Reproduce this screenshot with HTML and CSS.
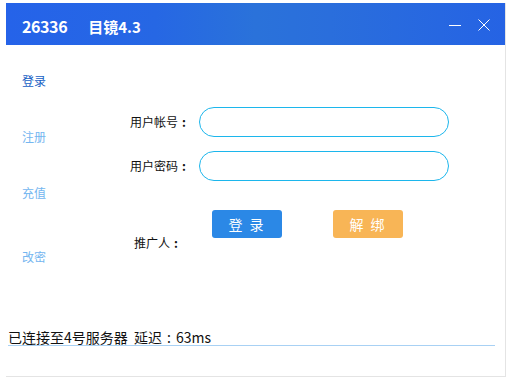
FILE: index.html
```html
<!DOCTYPE html>
<html lang="zh">
<head>
<meta charset="utf-8">
<link rel="stylesheet" href="styles.css">
</head>
<body>
<div class="window">
  <div class="titlebar">
    <span class="appid">26336</span>
    <span class="appname">目镜4.3</span>
    <div class="controls">
      <svg class="ctl" width="14" height="14" viewBox="0 0 14 14"><line x1="1" y1="8.5" x2="13" y2="8.5" stroke="#fff" stroke-width="1"/></svg>
      <svg class="ctl" width="14" height="14" viewBox="0 0 14 14"><path d="M1.5 2.5 L12.5 13.5 M12.5 2.5 L1.5 13.5" stroke="#fff" stroke-width="1"/></svg>
    </div>
  </div>
  <div class="main">
    <nav class="sidebar">
      <a class="nav-item active">登录</a>
      <a class="nav-item">注册</a>
      <a class="nav-item">充值</a>
      <a class="nav-item last">改密</a>
    </nav>
    <div class="form">
      <div class="row">
        <label class="label">用户帐号<span class="colon">:</span></label>
        <input class="field" type="text">
      </div>
      <div class="row">
        <label class="label">用户密码<span class="colon">:</span></label>
        <input class="field" type="password">
      </div>
      <div class="actions">
        <span class="referrer">推广人<span class="colon">:</span></span>
        <button class="btn btn-login">登 录</button>
        <button class="btn btn-unbind">解 绑</button>
      </div>
    </div>
  </div>
  <div class="status">已连接至4号服务器&nbsp;&nbsp;延迟<span class="colon colon-lg">:</span>63ms</div>
</div>
</body>
</html>
```
FILE: styles.css
```css
html, body {
  margin: 0;
  padding: 0;
  background: #ffffff;
}
body {
  font-family: "Noto Sans CJK SC", "Noto Sans", sans-serif;
}
.colon {
  display: inline-block;
  width: 12px;
  text-align: center;
  font-weight: bold;
}
.colon-lg {
  width: 14px;
  font-weight: normal;
}
.window {
  margin: 3px 0 0 6px;
  width: 500px;
  height: 374px;
  box-sizing: border-box;
  border-right: 1px solid #e4e4e4;
  border-bottom: 1px solid #e4e4e4;
  display: flex;
  flex-direction: column;
  background: #fff;
}
.titlebar {
  height: 42px;
  flex: none;
  display: flex;
  align-items: center;
  padding: 4px 0 0 16px;
  box-sizing: border-box;
  background: linear-gradient(90deg, #2563e9 0%, #2667e4 30%, #2a72da 50%, #2a6edc 65%, #2563e4 100%);
  color: #fff;
  font-weight: bold;
}
.appid {
  font-size: 16px;
  letter-spacing: -0.4px;
}
.appname {
  font-size: 15px;
  margin-left: 21px;
}
.controls {
  margin-left: auto;
  display: flex;
  gap: 15px;
  padding-right: 14px;
  margin-top: -4px;
}
.ctl {
  display: block;
}
.main {
  flex: 1;
  display: flex;
}
.sidebar {
  width: 118px;
  flex: none;
  display: flex;
  flex-direction: column;
  align-items: flex-start;
  padding: 28px 0 0 16px;
  box-sizing: border-box;
  gap: 40px;
}
.nav-item {
  font-size: 12px;
  line-height: 16px;
  color: #74b6f0;
}
.nav-item.active {
  color: #1760c4;
}
.nav-item.last {
  margin-top: 8px;
}
.form {
  padding: 62px 0 0 6px;
  display: flex;
  flex-direction: column;
}
.row {
  display: flex;
  align-items: center;
  margin-bottom: 14px;
}
.label {
  width: 60px;
  font-size: 12px;
  line-height: 16px;
  color: #111;
  margin-right: 9px;
  white-space: nowrap;
}
.field {
  width: 250px;
  height: 30px;
  box-sizing: border-box;
  border: 1px solid #1cb6ec;
  border-radius: 15px;
  outline: none;
  padding: 0 12px;
  margin: 0;
  background: #fff;
}
.actions {
  display: flex;
  align-items: flex-start;
  margin-top: 15px;
  padding-left: 4px;
}
.referrer {
  width: 48px;
  font-size: 12px;
  line-height: 16px;
  color: #111;
  margin-top: 25px;
  white-space: nowrap;
}
.btn {
  width: 70px;
  height: 28px;
  border: none;
  border-radius: 3px;
  color: #fff;
  font-family: "Noto Sans CJK SC", sans-serif;
  font-size: 14px;
  letter-spacing: 2px;
  padding: 0;
  line-height: 28px;
}
.btn-login {
  margin-left: 30px;
  background: #2b88e6;
}
.btn-unbind {
  margin-left: 51px;
  background: #f8b556;
}
.status {
  margin-left: 2px;
  width: 487px;
  font-size: 14px;
  line-height: 16px;
  color: #111;
  border-bottom: 1px solid #a8d1f4;
  margin-bottom: 30px;
  white-space: nowrap;
}
```
